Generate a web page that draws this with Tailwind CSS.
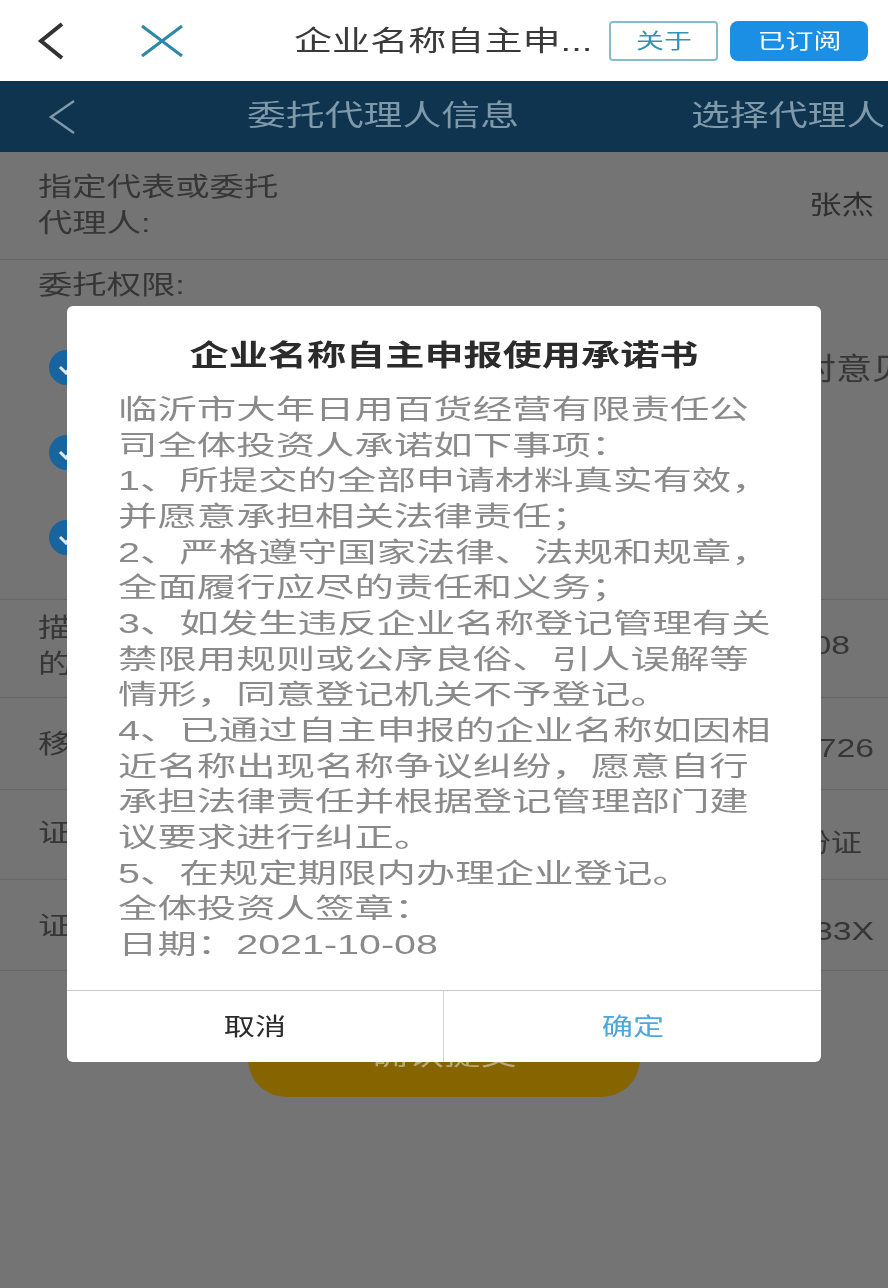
<!DOCTYPE html>
<html lang="zh-CN">
<head>
  <meta charset="UTF-8" />
  <title>企业名称自主申报</title>
  <script src="https://cdn.jsdelivr.net/npm/@tailwindcss/browser@4"></script>
</head>
<body>
  <div class="relative w-[888px] h-[1288px] overflow-hidden bg-[#747474] blur-[0.5px] font-['Liberation_Sans','Noto_Sans_CJK_SC',sans-serif]">

    <!-- app title bar -->
    <div class="flex items-center h-[81px] bg-white">
      <svg class="ml-[37px] w-[28px] h-[38px]" viewBox="0 0 28 38" fill="none" stroke="#333" stroke-width="4"><path d="M25 2 L4 19 L25 36" /></svg>
      <svg class="ml-[75px] w-[44px] h-[34px]" viewBox="0 0 44 34" fill="none" stroke="#2b88a8" stroke-width="3"><path d="M2 2 L42 32 M42 2 L2 32" /></svg>
      <div class="ml-[110px] mt-[3px] w-[315px] text-[28px] leading-none text-[#3a3a3a] whitespace-nowrap">
        <span class="block origin-left scale-x-[1.36]">企业名称自主申...</span>
      </div>
      <div class="flex items-center justify-center w-[109px] h-[40px] border-2 border-[#86bccd] rounded text-[21px] text-[#2f93b5]">
        <span class="block scale-x-[1.33]">关于</span>
      </div>
      <div class="flex items-center justify-center ml-[12px] w-[138px] h-[40px] bg-[#1a8fe3] rounded-lg text-[21px] text-white">
        <span class="block scale-x-[1.33]">已订阅</span>
      </div>
    </div>

    <!-- dimmed page header -->
    <div class="flex items-center h-[71px] bg-[#0e3450] text-[#7f99a8] whitespace-nowrap">
      <svg class="ml-[48px] w-[28px] h-[36px]" viewBox="0 0 28 36" fill="none" stroke="#7f99a8" stroke-width="2.5"><path d="M26 2 L3 18 L26 34" /></svg>
      <span class="block ml-[171px] text-[29px] leading-none origin-left scale-x-[1.34]">委托代理人信息</span>
      <span class="block ml-[241px] text-[29px] leading-none origin-left scale-x-[1.34]">选择代理人</span>
    </div>

    <!-- dimmed form rows -->
    <div class="text-[26px] leading-[36px] text-[#363636] whitespace-nowrap">
      <div class="flex items-center justify-between h-[108px] pl-[38px] pr-[14px] pb-[2px] border-b border-[#666666]">
        <div>
          <span class="block origin-left scale-x-[1.32]">指定代表或委托</span>
          <span class="block origin-left scale-x-[1.32]">代理人:</span>
        </div>
        <span class="block origin-right scale-x-[1.25] text-[#2e2e2e]">张杰</span>
      </div>

      <div class="h-[340px] border-b border-[#666666]">
        <div class="pl-[38px] pt-[7px]">
          <span class="block origin-left scale-x-[1.32]">委托权限:</span>
        </div>
        <div class="flex flex-col gap-[50px] pl-[49px] pt-[47px]">
          <div class="flex items-center justify-between h-[35px]">
            <div class="flex items-center justify-center w-[36px] h-[35px] rounded-full bg-[#18649e]">
              <svg class="w-[18px] h-[14px]" viewBox="0 0 18 14" fill="none" stroke="#dfe8ef" stroke-width="3"><path d="M2 6 L8 12 L16 2" /></svg>
            </div>
            <span class="block mr-[-20px] mt-[2px] text-[30px] origin-right scale-x-[1.2]">签署对意见</span>
          </div>
          <div class="flex items-center justify-center w-[36px] h-[35px] rounded-full bg-[#18649e]">
            <svg class="w-[18px] h-[14px]" viewBox="0 0 18 14" fill="none" stroke="#dfe8ef" stroke-width="3"><path d="M2 6 L8 12 L16 2" /></svg>
          </div>
          <div class="flex items-center justify-center w-[36px] h-[35px] rounded-full bg-[#18649e]">
            <svg class="w-[18px] h-[14px]" viewBox="0 0 18 14" fill="none" stroke="#dfe8ef" stroke-width="3"><path d="M2 6 L8 12 L16 2" /></svg>
          </div>
        </div>
      </div>

      <div class="flex items-center justify-between h-[98px] pl-[38px] pr-[38px] border-b border-[#666666]">
        <div class="mt-[-6px]">
          <span class="block origin-left scale-x-[1.32]">描述</span>
          <span class="block origin-left scale-x-[1.32]">的</span>
        </div>
        <span class="block origin-right scale-x-[1.3] mb-[8px]">2021-10-08</span>
      </div>
      <div class="flex items-center justify-between h-[92px] pl-[38px] pr-[14px] border-b border-[#666666]">
        <span class="block origin-left scale-x-[1.32]">移动电话</span>
        <span class="block origin-right scale-x-[1.3] mt-[8px]">13905391726</span>
      </div>
      <div class="flex items-center justify-between h-[90px] pl-[38px] pr-[26px] border-b border-[#666666]">
        <span class="block origin-left scale-x-[1.32] mt-[-4px]">证件类型</span>
        <span class="block origin-right scale-x-[1.2] mt-[16px]">身份证</span>
      </div>
      <div class="flex items-center justify-between h-[91px] pl-[38px] pr-[14px] border-b border-[#666666]">
        <span class="block origin-left scale-x-[1.32] mt-[2px]">证件号码</span>
        <span class="block origin-right scale-x-[1.3] mt-[12px]">37130219800101233X</span>
      </div>
    </div>

    <!-- submit button, mostly behind the dialog -->
    <div class="flex items-center justify-center mx-auto mt-[29px] w-[392px] h-[97px] rounded-[38px] bg-[#866400] text-[26px] text-[#b9a878]">
      <span class="block mt-[16px] scale-x-[1.4]">确认提交</span>
    </div>

    <!-- dialog -->
    <div class="absolute left-[67px] top-[306px] w-[754px] h-[756px] flex flex-col rounded-md bg-white">
      <div class="h-[685px] border-b border-[#c9c9c9] whitespace-nowrap">
        <div class="pt-[32px] h-[87px] text-[29px] leading-[36px] font-bold text-[#2b2b2b] text-center">
          <span class="block scale-x-[1.35]">企业名称自主申报使用承诺书</span>
        </div>
        <div class="pl-[51px] text-[27px] leading-[35.67px] text-[#8a8a8a]">
          <span class="block origin-left scale-x-[1.46]">临沂市大年日用百货经营有限责任公</span>
          <span class="block origin-left scale-x-[1.46]">司全体投资人承诺如下事项&#xFF1A;</span>
          <span class="block origin-left scale-x-[1.46]">1、所提交的全部申请材料真实有效&#xFF0C;</span>
          <span class="block origin-left scale-x-[1.46]">并愿意承担相关法律责任&#xFF1B;</span>
          <span class="block origin-left scale-x-[1.46]">2、严格遵守国家法律、法规和规章&#xFF0C;</span>
          <span class="block origin-left scale-x-[1.46]">全面履行应尽的责任和义务&#xFF1B;</span>
          <span class="block origin-left scale-x-[1.46]">3、如发生违反企业名称登记管理有关</span>
          <span class="block origin-left scale-x-[1.46]">禁限用规则或公序良俗、引人误解等</span>
          <span class="block origin-left scale-x-[1.46]">情形&#xFF0C;同意登记机关不予登记。</span>
          <span class="block origin-left scale-x-[1.46]">4、已通过自主申报的企业名称如因相</span>
          <span class="block origin-left scale-x-[1.46]">近名称出现名称争议纠纷&#xFF0C;愿意自行</span>
          <span class="block origin-left scale-x-[1.46]">承担法律责任并根据登记管理部门建</span>
          <span class="block origin-left scale-x-[1.46]">议要求进行纠正。</span>
          <span class="block origin-left scale-x-[1.46]">5、在规定期限内办理企业登记。</span>
          <span class="block origin-left scale-x-[1.46]">全体投资人签章&#xFF1A;</span>
          <span class="block origin-left scale-x-[1.46]">日期&#xFF1A;2021-10-08</span>
        </div>
      </div>
      <div class="flex flex-1 text-[24px]">
        <div class="flex items-center justify-center w-[377px] border-r border-[#d4d4d4] text-[#2b2b2b]">
          <span class="block scale-x-[1.3]">取消</span>
        </div>
        <div class="flex items-center justify-center flex-1 text-[#4aa8dc]">
          <span class="block scale-x-[1.3]">确定</span>
        </div>
      </div>
    </div>
  </div>
</body>
</html>
